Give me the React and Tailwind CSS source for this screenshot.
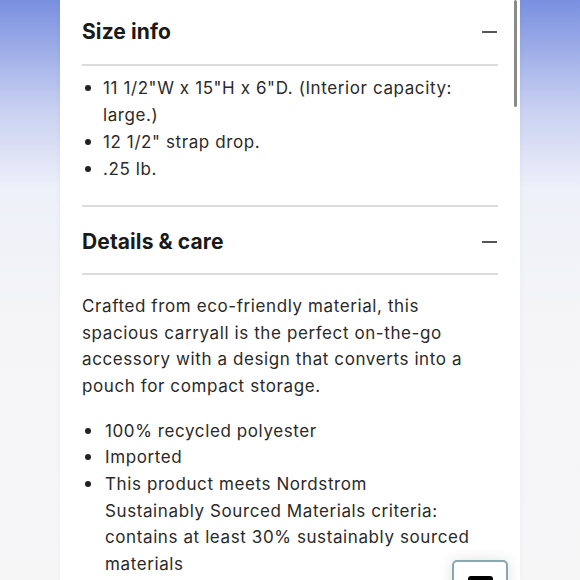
import React from "react";

const sizeItems = [
  '11 1/2"W x 15"H x 6"D. (Interior capacity: large.)',
  '12 1/2" strap drop.',
  ".25 lb.",
];

const careItems = [
  "100% recycled polyester",
  "Imported",
  "This product meets Nordstrom Sustainably Sourced Materials criteria: contains at least 30% sustainably sourced materials",
];

const SectionHeader = ({ title, className }) => (
  <div className={`flex items-center justify-between border-b-2 border-[#dcdcdc] ${className}`}>
    <h2 className="text-[21px] font-bold tracking-[0.1px] text-[#1a1a1a]">{title}</h2>
    <span className="block h-[1.5px] w-[15px] bg-[#555] mr-px" />
  </div>
);

const Bullets = ({ items, indent, lh }) => (
  <ul className="flex flex-col">
    {items.map((item) => (
      <li key={item} className={`flex ${lh}`}>
        <span className={`flex ${indent} shrink-0 h-[26px] items-center pl-[3px]`}>
          <span className="block w-[6px] h-[6px] rounded-full bg-[#222]" />
        </span>
        <span>{item}</span>
      </li>
    ))}
  </ul>
);

export default function App() {
  return (
    <div
      className="relative w-[580px] h-[580px] overflow-hidden flex justify-center bg-[linear-gradient(180deg,#7a90e0_0px,#c9d1f1_110px,#eef0f9_190px,#f5f5f7_320px,#f6f6f7_580px)]"
      style={{ fontFamily: "Inter, 'Open Sans', sans-serif" }}
    >
      <div className="relative w-[460px] h-full bg-white px-[22px] text-[17px] tracking-[0.6px] text-[#2a2a2a] shadow-[0_0_6px_rgba(0,0,0,0.04)]">
        <SectionHeader title="Size info" className="h-[66px]" />
        <div className="pt-[9px] pb-[22px] border-b-2 border-[#dcdcdc]">
          <Bullets items={sizeItems} indent="w-[21px]" lh="leading-[27px]" />
        </div>
        <SectionHeader title="Details & care" className="h-[68px] pt-[4px]" />
        <div className="pt-[18px]">
          <p className="leading-[26.7px] pr-[20px]">
            Crafted from eco-friendly material, this spacious carryall is the perfect on-the-go
            accessory with a design that converts into a pouch for compact storage.
          </p>
          <div className="mt-[18px] pr-[26px]">
            <Bullets items={careItems} indent="w-[23px]" lh="leading-[26.6px]" />
          </div>
        </div>
        <div className="absolute right-[3px] top-0 w-[3px] h-[107px] rounded-full bg-[#8a8a8a]" />
        <div className="absolute left-[392px] top-[560px] w-[56px] h-[44px] rounded-[5px] border-2 border-[#86a9b0] bg-white shadow-[0_0_14px_rgba(0,0,0,0.12)] flex justify-center pt-[14px]">
          <div className="w-[25px] h-[14px] rounded-[3px] bg-black" />
        </div>
      </div>
    </div>
  );
}
